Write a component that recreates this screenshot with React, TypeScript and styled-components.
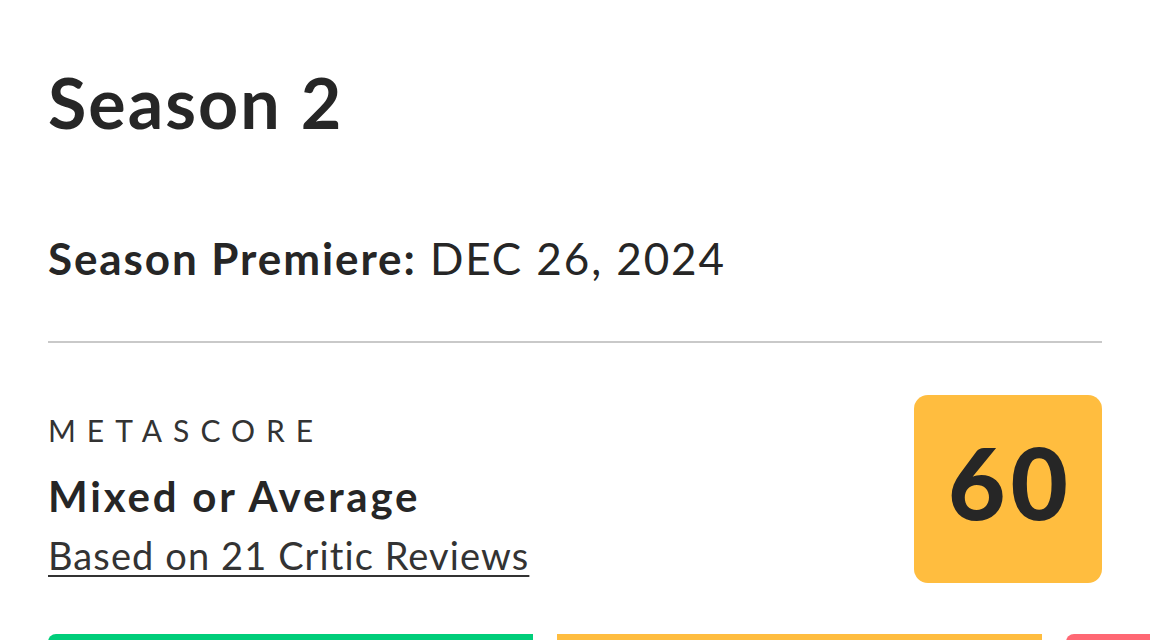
import React from "react";
import styled, { createGlobalStyle } from "styled-components";

const GlobalStyle = createGlobalStyle`
  html, body {
    margin: 0;
    padding: 0;
    background: #ffffff;
  }
  body {
    font-family: Lato, "Open Sans", "Liberation Sans", sans-serif;
    color: #262626;
    overflow: hidden;
  }
`;

const Page = styled.div`
  width: 1150px;
  height: 640px;
  overflow: hidden;
  padding: 0 48px;
  box-sizing: border-box;
`;

const Title = styled.h1`
  margin: 62px 0 0;
  font-size: 70px;
  line-height: 80px;
  font-weight: 700;
  letter-spacing: 2px;
`;

const Premiere = styled.div`
  margin-top: 90px;
  font-size: 44px;
  line-height: 52px;
  letter-spacing: 1.9px;
  b {
    font-weight: 700;
  }
  span {
    font-weight: 400;
  }
`;

const Divider = styled.hr`
  margin: 57px 0 0;
  border: 0;
  height: 2px;
  background: #c9c9c9;
`;

const ScoreRow = styled.section`
  display: flex;
  justify-content: space-between;
  align-items: flex-start;
  margin-top: 52px;
`;

const Info = styled.div`
  display: flex;
  flex-direction: column;
  padding-top: 17px;
`;

const Label = styled.div`
  font-size: 30px;
  line-height: 36px;
  letter-spacing: 11px;
  font-weight: 400;
  color: #333;
`;

const Verdict = styled.div`
  margin-top: 24px;
  font-size: 42px;
  line-height: 48px;
  font-weight: 700;
  letter-spacing: 2.8px;
`;

const Reviews = styled.a`
  margin-top: 12px;
  font-size: 38px;
  line-height: 46px;
  color: #333;
  letter-spacing: 1.1px;
  text-decoration: underline;
  text-decoration-thickness: 2px;
  text-underline-offset: 5px;
`;

const ScoreBox = styled.div`
  width: 188px;
  height: 188px;
  border-radius: 14px;
  background: #ffbd3f;
  display: flex;
  align-items: center;
  justify-content: center;
  padding-bottom: 16px;
  box-sizing: border-box;
  font-size: 99px;
  font-weight: 900;
  letter-spacing: 5px;
  text-indent: 5px;
  color: #262626;
`;

const Bars = styled.div`
  display: flex;
  gap: 24px;
  margin-top: 51px;
`;

const Bar = styled.div<{ $color: string; $round?: boolean }>`
  flex: 0 0 485px;
  height: 14px;
  background: ${(p) => p.$color};
  border-radius: ${(p) => (p.$round ? "8px 0 0 0" : "0")};
`;

export default function App() {
  return (
    <Page>
      <GlobalStyle />
      <Title>Season 2</Title>
      <Premiere>
        <b>Season Premiere:</b> <span>DEC 26, 2024</span>
      </Premiere>
      <Divider />
      <ScoreRow>
        <Info>
          <Label>METASCORE</Label>
          <Verdict>Mixed or Average</Verdict>
          <Reviews href="#">Based on 21 Critic Reviews</Reviews>
        </Info>
        <ScoreBox>60</ScoreBox>
      </ScoreRow>
      <Bars>
        <Bar $color="#00ce7a" $round />
        <Bar $color="#ffbd3f" />
        <Bar $color="#ff6874" $round />
      </Bars>
    </Page>
  );
}
